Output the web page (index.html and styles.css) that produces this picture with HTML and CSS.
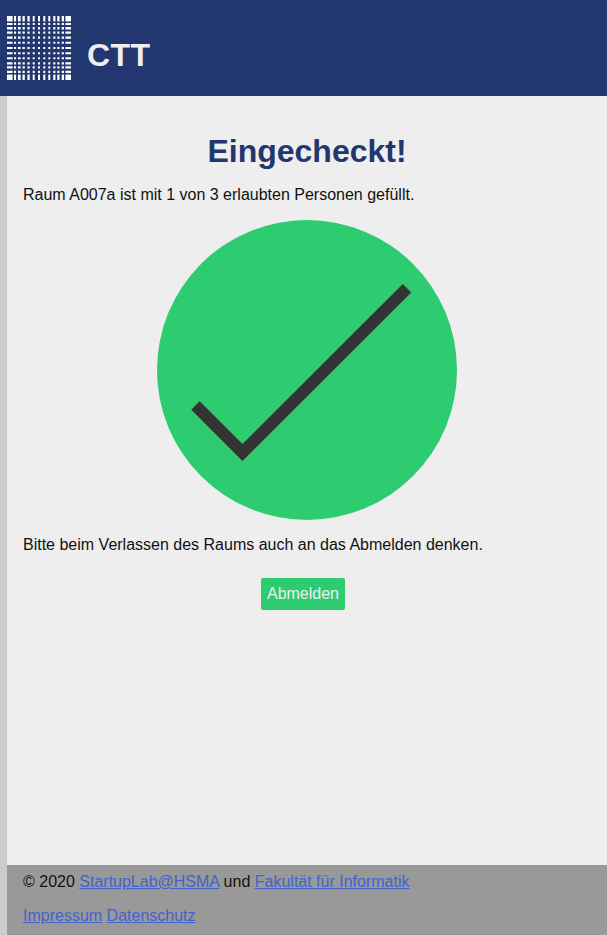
FILE: index.html
```
<!DOCTYPE html>
<html lang="de">
<head>
<meta charset="utf-8">
<title>CTT</title>
<link rel="stylesheet" href="styles.css">
</head>
<body>
<header class="header">
  <svg class="logo" viewBox="0 0 64 64" aria-hidden="true">
    <defs>
      <path id="gaps" d="M5.6 0h1.4v64h-1.4zM9.1 0h1.9v64h-1.9zM13.6 0h1.9v64h-1.9zM17.8 0h2.6v64h-2.6zM22.7 0h3v64h-3zM27.7 0h3.3v64h-3.3zM33 0h3.3v64h-3.3zM38.3 0h3v64h-3zM43.3 0h3v64h-3zM48.4 0h1.9v64h-1.9zM52.5 0h2.2v64h-2.2zM57 0h1.4v64h-1.4z"/>
    </defs>
    <rect width="64" height="64" fill="#fff"/>
    <use href="#gaps"/>
    <use href="#gaps" transform="matrix(0 1 1 0 0 0)"/>
  </svg>
  <h1 class="brand">CTT</h1>
</header>
<div class="page">
  <main class="content">
    <h1 class="title">Eingecheckt!</h1>
    <p class="text intro">Raum A007a ist mit 1 von 3 erlaubten Personen gefüllt.</p>
    <svg class="status" viewBox="0 0 300 300" aria-hidden="true">
      <circle cx="150" cy="150" r="150" fill="#2ecc71"/>
      <path d="M38.5 185.5L85.5 232.5L250 68.3" fill="none" stroke="#333" stroke-width="12"/>
    </svg>
    <p class="text">Bitte beim Verlassen des Raums auch an das Abmelden denken.</p>
    <button class="button">Abmelden</button>
  </main>
  <footer class="footer">
    <p class="line">© 2020 <a href="#">StartupLab@HSMA</a> und <a href="#">Fakultät für Informatik</a></p>
    <p class="line"><a href="#">Impressum</a> <a href="#">Datenschutz</a></p>
  </footer>
</div>
</body>
</html>
```
FILE: styles.css
```
* { box-sizing: border-box; }
body {
  margin: 0;
  height: 935px;
  display: flex;
  flex-direction: column;
  background: #ccc;
  color: #111;
  font: 16px/18px "Liberation Sans", Arial, sans-serif;
}
.header {
  flex: none;
  height: 96px;
  padding: 16px 7px;
  display: flex;
  gap: 16px;
  background: #22376f;
}
.logo { width: 64px; height: 64px; fill: #22376f; }
.brand {
  margin: 21px 0 0;
  font-size: 32px;
  line-height: 36px;
  letter-spacing: 0.4px;
  color: #eee;
}
.page {
  flex: 1;
  margin-left: 7px;
  display: flex;
  flex-direction: column;
  background: #eee;
}
.content {
  flex: 1;
  padding: 37px 16px 0;
  display: flex;
  flex-direction: column;
}
.title {
  margin: 0;
  font-size: 32px;
  line-height: 36px;
  text-align: center;
  color: #22376f;
}
.text { margin: 16px 0 0; }
.intro { margin-top: 17px; }
.status {
  width: 300px;
  height: 300px;
  margin-top: 16px;
  align-self: center;
}
.button {
  width: 84px;
  height: 32px;
  margin: 24px 8px 0 0;
  padding: 0;
  align-self: center;
  border: 0;
  border-radius: 2px;
  background: #2ecc71;
  color: #eee;
  font: inherit;
}
.footer {
  height: 70px;
  padding: 8px 16px;
  background: #999;
}
.line { margin: 0 0 16px; }
.line a { color: #4163cc; }
```
